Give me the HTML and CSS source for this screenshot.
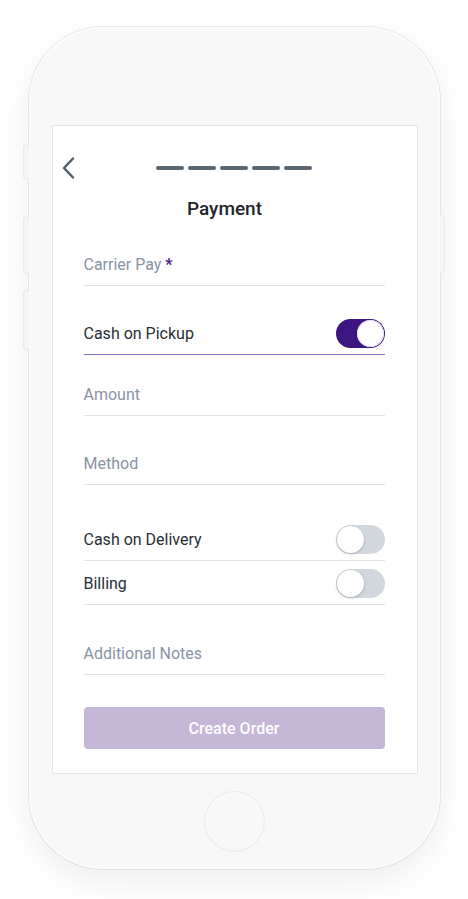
FILE: index.html
```html
<!DOCTYPE html>
<html lang="en">
<head>
<meta charset="utf-8">
<title>Payment</title>
<link rel="stylesheet" href="styles.css">
</head>
<body>
<div class="phone">
  <span class="side-btn side-l1"></span>
  <span class="side-btn side-l2"></span>
  <span class="side-btn side-l3"></span>
  <span class="side-btn side-r1"></span>
  <div class="screen">
    <div class="header">
      <svg class="back" width="14" height="22" viewBox="0 0 14 22" aria-hidden="true">
        <path d="M11 1.5 L2 11 L11 20.5" fill="none" stroke="#4f5b67" stroke-width="2.4" stroke-linecap="round" stroke-linejoin="round"/>
      </svg>
      <div class="steps">
        <span class="step"></span><span class="step"></span><span class="step"></span><span class="step"></span><span class="step"></span>
      </div>
    </div>
    <h1 class="title">Payment</h1>
    <div class="form">
      <div class="row row-carrier"><span class="placeholder">Carrier Pay <span class="req">*</span></span></div>
      <div class="row row-active row-pickup"><span class="label">Cash on Pickup</span><span class="toggle on"><span class="knob"></span></span></div>
      <div class="row row-amount"><span class="placeholder">Amount</span></div>
      <div class="row row-method"><span class="placeholder">Method</span></div>
      <div class="row row-delivery"><span class="label">Cash on Delivery</span><span class="toggle"><span class="knob"></span></span></div>
      <div class="row row-billing"><span class="label">Billing</span><span class="toggle"><span class="knob"></span></span></div>
      <div class="row row-notes"><span class="placeholder">Additional Notes</span></div>
      <button class="submit" type="button">Create Order</button>
    </div>
  </div>
  <div class="home"></div>
</div>
</body>
</html>
```
FILE: styles.css
```css
* { box-sizing: border-box; }
html, body { margin: 0; padding: 0; background: #ffffff; }
body {
  font-family: Roboto, "Noto Sans", "Liberation Sans", sans-serif;
  display: flex;
  justify-content: center;
  padding-top: 27px;
  height: 899px;
  overflow: hidden;
}
.phone {
  position: relative;
  width: 411px;
  height: 842px;
  border-radius: 74px;
  background: #f8f8f9;
  padding: 98px 22px 0 23px;
  box-shadow: 0 12px 34px rgba(0,0,0,0.07), 0 0 0 1px #ececed, inset 0 0 0 2px #fbfbfc;
}
.side-btn {
  position: absolute;
  width: 6px;
  background: #f5f5f6;
  border: 1px solid #ebebec;
  border-radius: 3px;
}
.side-l1 { left: -6px; top: 118px; height: 34px; border-right: none; border-radius: 3px 0 0 3px; }
.side-l2 { left: -6px; top: 190px; height: 56px; border-right: none; border-radius: 3px 0 0 3px; }
.side-l3 { left: -6px; top: 263px; height: 60px; border-right: none; border-radius: 3px 0 0 3px; }
.side-r1 { right: -5px; width: 5px; top: 188px; height: 58px; border-left: none; border-radius: 0 3px 3px 0; }

.screen {
  width: 366px;
  height: 649px;
  background: #ffffff;
  border: 1px solid #dfe5ec;
  border-radius: 2px;
  padding-top: 22px;
  display: flex;
  flex-direction: column;
}
.header {
  height: 40px;
  display: grid;
  grid-template-columns: 1fr auto 1fr;
  align-items: center;
}
.back { margin-left: 9px; display: block; }
.steps { display: flex; gap: 4px; margin-left: -1px; }
.step {
  width: 28px;
  height: 4px;
  border-radius: 2px;
  background: #5b6571;
}
.title {
  margin: 10px 0 0;
  padding-right: 20px;
  font-size: 19px;
  line-height: 22px;
  font-weight: 500;
  text-align: center;
  color: #1f262d;
}
.form {
  padding: 0 32px 0 31px;
  margin-top: 24px;
  display: flex;
  flex-direction: column;
}
.row {
  height: 42px;
  display: flex;
  align-items: center;
  justify-content: space-between;
  border-bottom: 1px solid #dde3ea;
  font-size: 16px;
  padding-bottom: 1px;
}
.row-active { border-bottom-color: #8a6bc9; }
.row-pickup { margin-top: 27px; }
.row-amount { margin-top: 19px; }
.row-method { margin-top: 27px; }
.row-delivery { margin-top: 34px; }
.row-billing { margin-top: 2px; }
.row-notes { margin-top: 28px; }
.placeholder { color: #8993a4; }
.req { color: #4a1c8c; font-weight: 700; }
.label { color: #282e34; }
.toggle {
  position: relative;
  width: 49px;
  height: 29px;
  border-radius: 15px;
  background: #d2d7dd;
  display: flex;
  align-items: center;
  padding: 0 1px;
}
.toggle .knob {
  width: 27px;
  height: 27px;
  border-radius: 50%;
  background: #ffffff;
  box-shadow: 0 1px 3px rgba(0,0,0,0.22);
}
.toggle.on {
  background: #3d1580;
  justify-content: flex-end;
}
.toggle.on .knob { box-shadow: inset 0 0 0 1px #e4dcef; }
.submit {
  margin-top: 32px;
  height: 42px;
  width: 100%;
  border: none;
  border-radius: 4px;
  background: #c5b7d8;
  color: #ffffff;
  font-family: Roboto, "Noto Sans", "Liberation Sans", sans-serif;
  font-size: 16px;
  font-weight: 500;
}
.home {
  width: 61px;
  height: 61px;
  margin: 17px auto 0;
  border-radius: 50%;
  background: #f9f9fa;
  border: 1px solid #ebebec;
  box-shadow: inset 0 -1px 2px rgba(0,0,0,0.03);
}
```
